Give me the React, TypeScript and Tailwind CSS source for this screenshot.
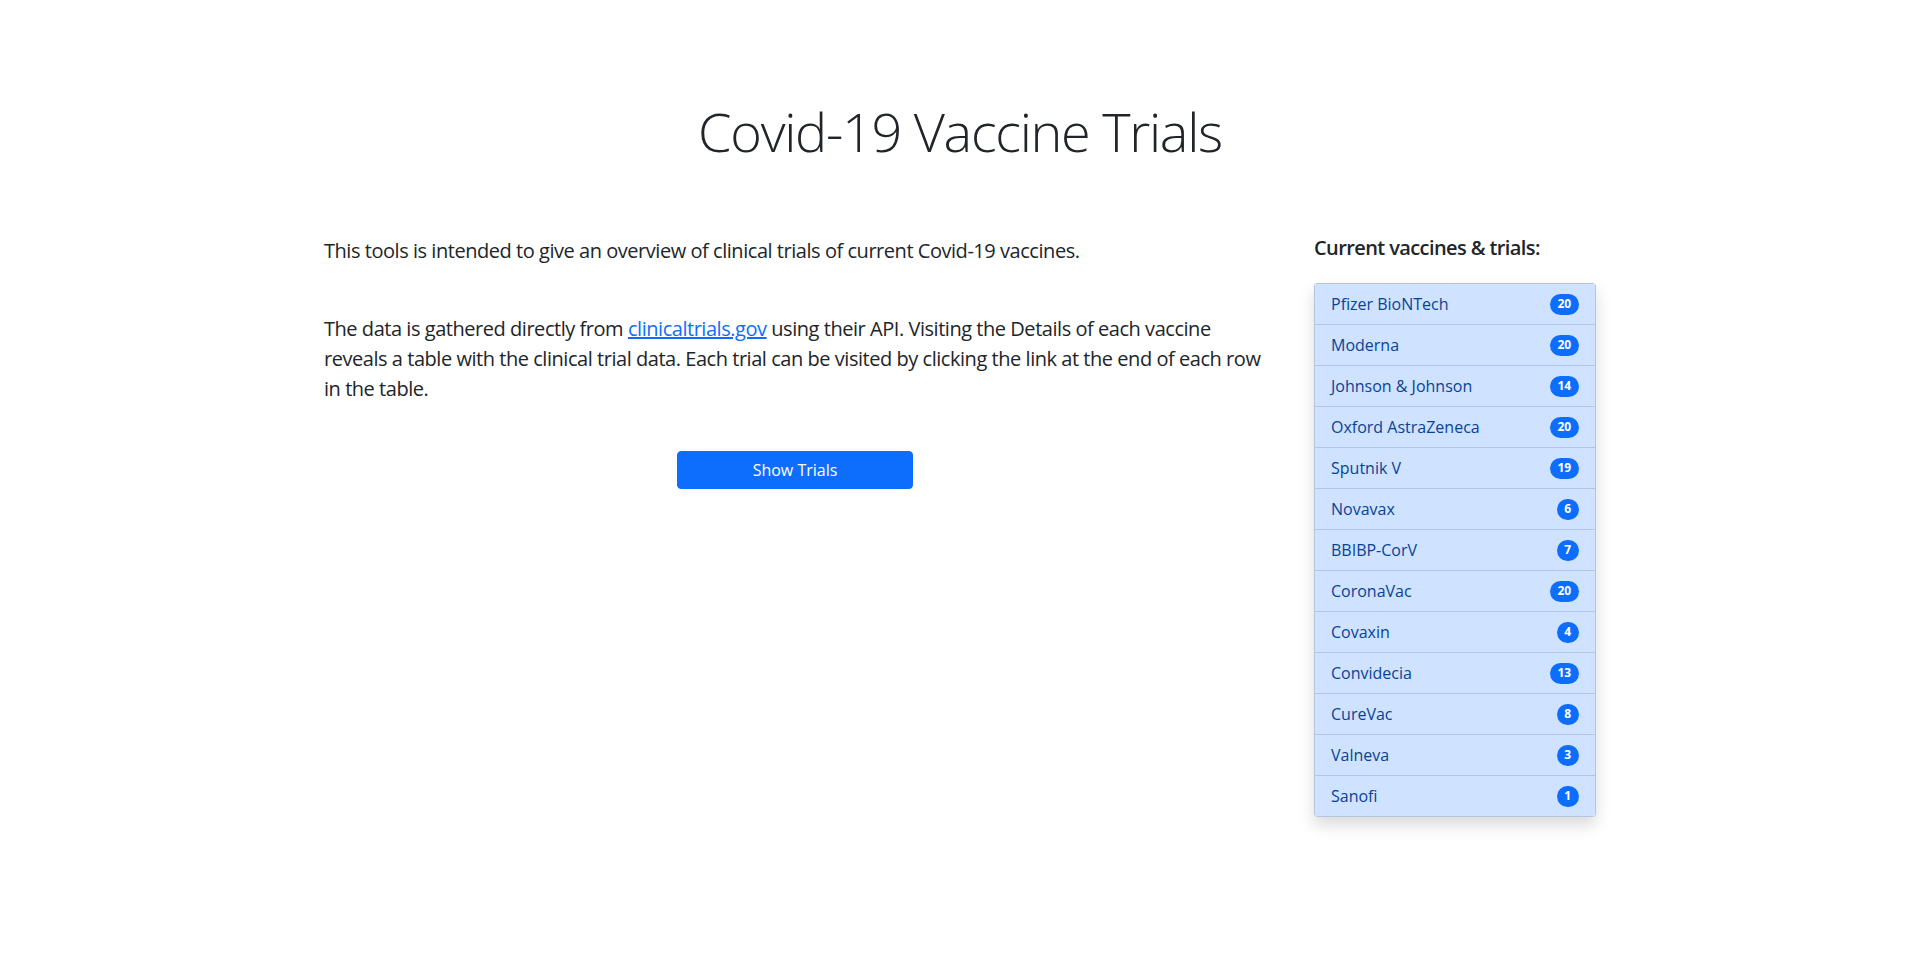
import React from 'react';

const vaccines: [string, number][] = [
    ['Pfizer BioNTech', 20],
    ['Moderna', 20],
    ['Johnson & Johnson', 14],
    ['Oxford AstraZeneca', 20],
    ['Sputnik V', 19],
    ['Novavax', 6],
    ['BBIBP-CorV', 7],
    ['CoronaVac', 20],
    ['Covaxin', 4],
    ['Convidecia', 13],
    ['CureVac', 8],
    ['Valneva', 3],
    ['Sanofi', 1],
];

const VaccineList: React.FC = () => (
    <div className="overflow-hidden rounded-[4px] shadow-[0_0.5rem_1rem_rgba(0,0,0,0.15)]">
        {vaccines.map(([name, count], i) => (
            <div
                key={name}
                className={`flex items-center justify-between border border-[rgba(0,0,0,0.125)] bg-[#cfe2ff] px-4 py-2 text-[16px] leading-6 text-[#084298] ${i > 0 ? 'border-t-0' : ''}`}
            >
                <span>{name}</span>
                <span className="rounded-full bg-[#0d6efd] px-[7.8px] py-[4.2px] text-[12px] font-bold leading-none text-white">
                    {count}
                </span>
            </div>
        ))}
    </div>
);

export default function App() {
    return (
        <div className="min-h-screen bg-white font-['Open_Sans',sans-serif] text-[#212529]">
            <div className="mx-auto w-[1320px]">
                <h1 className="pt-[98.6px] text-center text-[54px] font-light leading-[1.2] tracking-[-1.3px]">
                    Covid-19 Vaccine Trials
                </h1>

                <div className="mt-[73px] flex">
                    {/* intro text */}
                    <div className="w-[990px] px-6">
                        <p className="text-[20px] leading-[30px] tracking-[-0.46px]">
                            This tools is intended to give an overview of clinical trials of current Covid-19 vaccines.
                        </p>
                        <p className="mt-[48px] mr-[-12px] text-[20px] leading-[30px] tracking-[-0.46px]">
                            The data is gathered directly from{' '}
                            <a href="#" className="text-[#0d6efd] underline">clinicaltrials.gov</a> using their API.
                            Visiting the Details of each vaccine reveals a table with the clinical trial data. Each trial
                            can be visited by clicking the link at the end of each row in the table.
                        </p>
                        <button className="mx-auto mt-[47px] block w-1/4 rounded-[4px] border border-[#0d6efd] bg-[#0d6efd] px-3 py-[6px] text-[16px] leading-6 text-white">
                            Show Trials
                        </button>
                    </div>

                    {/* sidebar */}
                    <div className="w-[330px] px-6">
                        <h5 className="mb-[23px] text-[20px] font-semibold leading-[1.2] tracking-[-0.6px]">
                            Current vaccines &amp; trials:
                        </h5>
                        <VaccineList />
                    </div>
                </div>
            </div>
        </div>
    );
}
